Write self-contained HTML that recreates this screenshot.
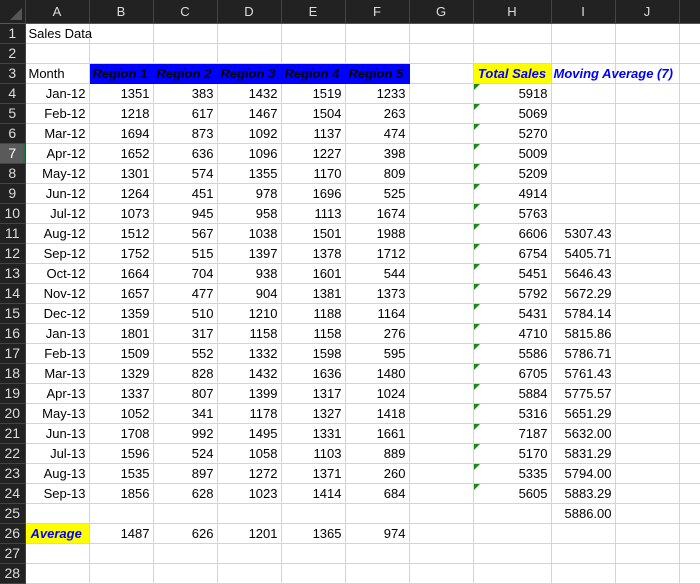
<!DOCTYPE html>
<html><head><meta charset="utf-8"><style>
body{margin:0;background:#fff;width:700px;height:569px;overflow:hidden;font-family:"Liberation Sans",sans-serif;font-size:13px;color:#000}
table{border-collapse:collapse;table-layout:fixed;width:721px}
td{height:19px;padding:0 3px;border-right:1px solid #d4d4d4;border-bottom:1px solid #d4d4d4;white-space:nowrap;overflow:visible;text-align:right;line-height:19px;position:relative}
tr.h td{background:#222;color:#ddd;text-align:center;height:23px;border-right:1px solid #444;border-bottom:1px solid #555;font-size:13px}
td.r{background:#222;color:#ddd;text-align:center;border-right:1px solid #444;border-bottom:1px solid #444;padding:0;font-size:14px}
td.sel{background:#5a5a5a;color:#fff;box-shadow:inset -2px 0 0 #217346}
.l{text-align:left}
.b{background:#0000ff;font-weight:bold;font-style:italic;text-align:left;color:#000;border-color:#0000ff}
.y{background:#ffff00;color:#0000ff;font-weight:bold;font-style:italic;text-align:center}
.bl{color:#0000ff;font-weight:bold;font-style:italic;text-align:left;overflow:visible}
.t::before{content:"";position:absolute;left:0;top:0;border-top:6px solid #1a8a1a;border-right:6px solid transparent}
</style></head><body>
<table>
<colgroup><col style="width:25px"><col style="width:64px"><col style="width:64px"><col style="width:64px"><col style="width:64px"><col style="width:64px"><col style="width:64px"><col style="width:64px"><col style="width:78px"><col style="width:64px"><col style="width:64px"><col style="width:42px"></colgroup>
<tr class="h"><td><svg width="12" height="12" style="position:absolute;right:3px;bottom:3px"><polygon points="12,0 12,12 0,12" fill="#555"/></svg></td><td>A</td><td>B</td><td>C</td><td>D</td><td>E</td><td>F</td><td>G</td><td>H</td><td>I</td><td>J</td><td></td></tr>
<tr><td class="r">1</td><td class="l" style="overflow:visible">Sales Data</td><td></td><td></td><td></td><td></td><td></td><td></td><td></td><td></td><td></td><td></td></tr>
<tr><td class="r">2</td><td></td><td></td><td></td><td></td><td></td><td></td><td></td><td></td><td></td><td></td><td></td></tr>
<tr><td class="r">3</td><td class="l">Month</td><td class="b">Region 1</td><td class="b">Region 2</td><td class="b">Region 3</td><td class="b">Region 4</td><td class="b">Region 5</td><td></td><td class="y">Total Sales</td><td class="bl" style="padding-left:2px">Moving Average (7)</td><td></td><td></td></tr>
<tr><td class="r">4</td><td>Jan-12</td><td>1351</td><td>383</td><td>1432</td><td>1519</td><td>1233</td><td></td><td class="t">5918</td><td></td><td></td><td></td></tr>
<tr><td class="r">5</td><td>Feb-12</td><td>1218</td><td>617</td><td>1467</td><td>1504</td><td>263</td><td></td><td class="t">5069</td><td></td><td></td><td></td></tr>
<tr><td class="r">6</td><td>Mar-12</td><td>1694</td><td>873</td><td>1092</td><td>1137</td><td>474</td><td></td><td class="t">5270</td><td></td><td></td><td></td></tr>
<tr><td class="r sel">7</td><td>Apr-12</td><td>1652</td><td>636</td><td>1096</td><td>1227</td><td>398</td><td></td><td class="t">5009</td><td></td><td></td><td></td></tr>
<tr><td class="r">8</td><td>May-12</td><td>1301</td><td>574</td><td>1355</td><td>1170</td><td>809</td><td></td><td class="t">5209</td><td></td><td></td><td></td></tr>
<tr><td class="r">9</td><td>Jun-12</td><td>1264</td><td>451</td><td>978</td><td>1696</td><td>525</td><td></td><td class="t">4914</td><td></td><td></td><td></td></tr>
<tr><td class="r">10</td><td>Jul-12</td><td>1073</td><td>945</td><td>958</td><td>1113</td><td>1674</td><td></td><td class="t">5763</td><td></td><td></td><td></td></tr>
<tr><td class="r">11</td><td>Aug-12</td><td>1512</td><td>567</td><td>1038</td><td>1501</td><td>1988</td><td></td><td class="t">6606</td><td>5307.43</td><td></td><td></td></tr>
<tr><td class="r">12</td><td>Sep-12</td><td>1752</td><td>515</td><td>1397</td><td>1378</td><td>1712</td><td></td><td class="t">6754</td><td>5405.71</td><td></td><td></td></tr>
<tr><td class="r">13</td><td>Oct-12</td><td>1664</td><td>704</td><td>938</td><td>1601</td><td>544</td><td></td><td class="t">5451</td><td>5646.43</td><td></td><td></td></tr>
<tr><td class="r">14</td><td>Nov-12</td><td>1657</td><td>477</td><td>904</td><td>1381</td><td>1373</td><td></td><td class="t">5792</td><td>5672.29</td><td></td><td></td></tr>
<tr><td class="r">15</td><td>Dec-12</td><td>1359</td><td>510</td><td>1210</td><td>1188</td><td>1164</td><td></td><td class="t">5431</td><td>5784.14</td><td></td><td></td></tr>
<tr><td class="r">16</td><td>Jan-13</td><td>1801</td><td>317</td><td>1158</td><td>1158</td><td>276</td><td></td><td class="t">4710</td><td>5815.86</td><td></td><td></td></tr>
<tr><td class="r">17</td><td>Feb-13</td><td>1509</td><td>552</td><td>1332</td><td>1598</td><td>595</td><td></td><td class="t">5586</td><td>5786.71</td><td></td><td></td></tr>
<tr><td class="r">18</td><td>Mar-13</td><td>1329</td><td>828</td><td>1432</td><td>1636</td><td>1480</td><td></td><td class="t">6705</td><td>5761.43</td><td></td><td></td></tr>
<tr><td class="r">19</td><td>Apr-13</td><td>1337</td><td>807</td><td>1399</td><td>1317</td><td>1024</td><td></td><td class="t">5884</td><td>5775.57</td><td></td><td></td></tr>
<tr><td class="r">20</td><td>May-13</td><td>1052</td><td>341</td><td>1178</td><td>1327</td><td>1418</td><td></td><td class="t">5316</td><td>5651.29</td><td></td><td></td></tr>
<tr><td class="r">21</td><td>Jun-13</td><td>1708</td><td>992</td><td>1495</td><td>1331</td><td>1661</td><td></td><td class="t">7187</td><td>5632.00</td><td></td><td></td></tr>
<tr><td class="r">22</td><td>Jul-13</td><td>1596</td><td>524</td><td>1058</td><td>1103</td><td>889</td><td></td><td class="t">5170</td><td>5831.29</td><td></td><td></td></tr>
<tr><td class="r">23</td><td>Aug-13</td><td>1535</td><td>897</td><td>1272</td><td>1371</td><td>260</td><td></td><td class="t">5335</td><td>5794.00</td><td></td><td></td></tr>
<tr><td class="r">24</td><td>Sep-13</td><td>1856</td><td>628</td><td>1023</td><td>1414</td><td>684</td><td></td><td class="t">5605</td><td>5883.29</td><td></td><td></td></tr>
<tr><td class="r">25</td><td></td><td></td><td></td><td></td><td></td><td></td><td></td><td></td><td>5886.00</td><td></td><td></td></tr>
<tr><td class="r">26</td><td class="y" style="text-align:left;padding-left:5px">Average</td><td>1487</td><td>626</td><td>1201</td><td>1365</td><td>974</td><td></td><td></td><td></td><td></td><td></td></tr>
<tr><td class="r">27</td><td></td><td></td><td></td><td></td><td></td><td></td><td></td><td></td><td></td><td></td><td></td></tr>
<tr><td class="r">28</td><td></td><td></td><td></td><td></td><td></td><td></td><td></td><td></td><td></td><td></td><td></td></tr>
</table>
</body></html>
